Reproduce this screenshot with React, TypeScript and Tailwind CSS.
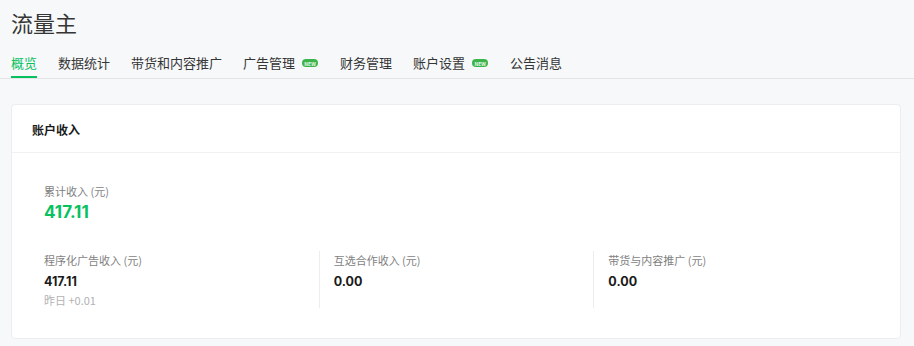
const tabs = [
  { label: '概览', active: true },
  { label: '数据统计' },
  { label: '带货和内容推广' },
  { label: '广告管理', isNew: true },
  { label: '财务管理' },
  { label: '账户设置', isNew: true },
  { label: '公告消息' },
];

const incomes = [
  { label: '程序化广告收入 (元)', value: '417.11', yesterday: '+0.01' },
  { label: '互选合作收入 (元)', value: '0.00' },
  { label: '带货与内容推广 (元)', value: '0.00' },
];

const numFont = { fontFamily: 'Inter, "Noto Sans CJK SC", sans-serif' };

export default function App() {
  return (
    <div
      className="min-h-[346px] bg-[#f7f8fa] text-[#353535]"
      style={{ fontFamily: '"Noto Sans CJK SC", "Noto Sans", sans-serif' }}
    >
      <h1 className="pl-[11px] pt-[7px] text-[22px] leading-[30px] font-normal">流量主</h1>

      {/* Tabs */}
      <div className="mt-[17px] flex gap-[21px] border-b border-[#e2e4e8] pl-[11px]">
        {tabs.map((t) => (
          <div
            key={t.label}
            className={`flex items-start border-b-2 pb-[4px] text-[13px] leading-[18px] ${
              t.active ? 'border-[#07c160] text-[#07c160]' : 'border-transparent text-[#353535]'
            }`}
          >
            <span>{t.label}</span>
            {t.isNew && (
              <span className="ml-[7px] mr-[1px] mt-[5px] flex h-[8px] w-[16px] items-center justify-center rounded-full bg-[#3bb54a] text-[5px] font-bold leading-none text-white/90">
                NEW
              </span>
            )}
          </div>
        ))}
      </div>

      {/* Account income card */}
      <div className="ml-[11px] mr-[13px] mt-[25px] rounded-[4px] border border-[#ebedf0] bg-white">
        <div className="flex h-[48px] items-center border-b border-[#f0f1f3] pl-[20px] pt-[3px]">
          <h2 className="text-[12px] font-bold text-[#1a1a1a]">账户收入</h2>
        </div>
        <div className="px-[32px] pb-[30px] pt-[29px]">
          <p className="text-[11px] leading-[18px] text-[#7f7f7f]">累计收入 (元)</p>
          <p className="text-[17px] font-bold leading-[24px] text-[#07c160]" style={numFont}>
            417.11
          </p>

          <div className="mt-[27px] grid grid-cols-3">
            {incomes.map((inc, i) => (
              <div
                key={inc.label}
                className={`h-[57px] ${i > 0 ? 'border-l border-[#ebedf0] pl-[14px]' : ''}`}
              >
                <p className="text-[11px] leading-[18px] text-[#7f7f7f]">{inc.label}</p>
                <p className="mt-[4px] text-[12.5px] font-bold leading-[18px] text-[#1a1a1a]" style={numFont}>
                  {inc.value}
                </p>
                {inc.yesterday && (
                  <p className="text-[11px] leading-[18px] text-[#b2b2b2]">昨日 {inc.yesterday}</p>
                )}
              </div>
            ))}
          </div>
        </div>
      </div>
    </div>
  );
}
